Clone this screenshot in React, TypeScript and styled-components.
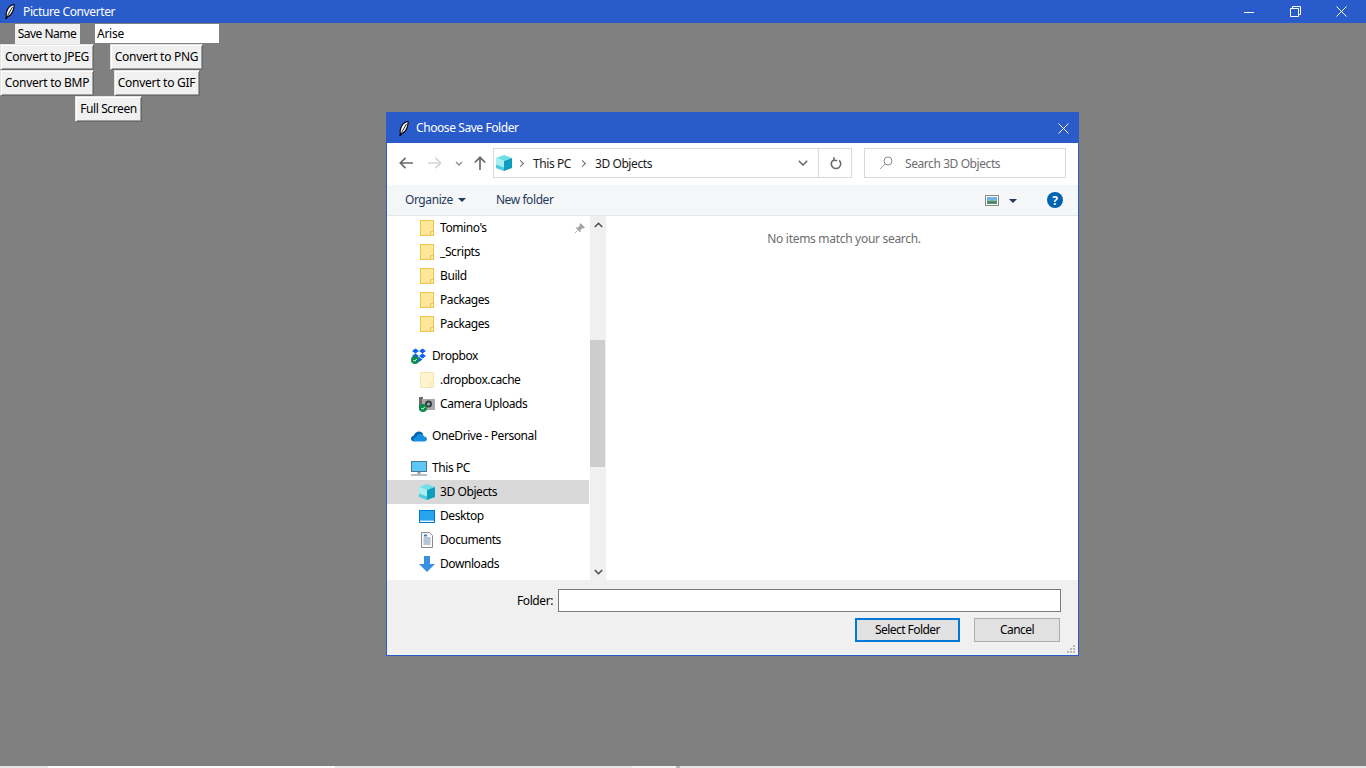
import React from 'react';
import styled, { createGlobalStyle } from 'styled-components';

const BLUE = '#295bcb';
const FONT = `'Noto Sans', 'Open Sans', sans-serif`;

const GlobalStyle = createGlobalStyle`
  html, body {
    margin: 0;
    height: 100%;
    background: #808080;
    overflow: hidden;
  }
  * { box-sizing: border-box; }
`;

const Feather = () => (
  <svg width="10" height="15" viewBox="0 0 10 15">
    <path d="M9 .5C6 1 3 3.500 1.700 7.500 1 9.700 1 11.500 1.500 12.500L.8 14.600 1.500 14.800 2.300 12.700C5 12 7.300 9 8.400 5.500 8.900 3.700 9.300 2 9 .5Z" fill="#fff" stroke="#000" strokeWidth="1.100" />
    <path d="M7.500 3 2.500 11.500" stroke="#000" strokeWidth=".9" fill="none" />
  </svg>
);

const CloseGlyph = () => (
  <svg width="11" height="11" viewBox="0 0 11 11">
    <path d="M.5 .5l10 10M10.500 .5l-10 10" stroke="#fff" strokeWidth="1" fill="none" />
  </svg>
);

const Cube = () => (
  <svg width="16" height="16" viewBox="0 0 16 16">
    <path d="M8 0 16 3 8 6 0 3Z" fill="#6fe0ea" />
    <path d="M0 3 8 6v10L0 13Z" fill="#a8eef2" />
    <path d="M16 3 8 6v10l8-3Z" fill="#0e9dbf" />
    <path d="M0 9.500 8 12.500v3.500L0 13Z" fill="#4fcbdc" />
  </svg>
);

const FolderIcon = ({ faded }: { faded?: boolean }) => (
  <svg width="14" height="16" viewBox="0 0 14 16" opacity={faded ? 0.45 : 1}>
    <rect x=".5" y=".5" width="13" height="15" fill="#ffe797" stroke="#eec64f" />
    <path d="M10.500 15.500v-4h3" fill="none" stroke="#eec64f" />
  </svg>
);

const SyncBadge = () => (
  <>
    <circle cx="4" cy="12" r="4" fill="#0c8a4d" />
    <path d="M2.300 12l1.300 1.300 2.200-2.400" stroke="#fff" strokeWidth="1" fill="none" />
  </>
);

const Dropbox = () => (
  <svg width="16" height="16" viewBox="0 0 16 16">
    <path d="M4.500 .5 8 3 4.500 5.500 1 3ZM11.500 .5 15 3l-3.500 2.500L8 3ZM4.500 5.500 8 8 4.500 10.500 1 8ZM11.500 5.500 15 8l-3.500 2.500L8 8ZM8 9l3.500 2.500L8 14l-3.500-2.500Z" fill="#0a62f2" />
    <SyncBadge />
  </svg>
);

const Camera = () => (
  <svg width="16" height="16" viewBox="0 0 16 16">
    <rect x="0" y="1" width="4" height="13" fill="#6a6a6a" />
    <rect x="3" y="3" width="13" height="11" fill="#a9a9a9" />
    <circle cx="9.500" cy="8" r="3.500" fill="#3b3b3b" />
    <circle cx="9.500" cy="8" r="1.500" fill="#8fb7c9" />
    <SyncBadge />
  </svg>
);

const OneDrive = () => (
  <svg width="16" height="11" viewBox="0 0 16 11">
    <path d="M3.500 10.500C1.500 10.500 0 9.300 0 7.700 0 6.200 1.200 5 2.800 4.800 3.500 2.300 5.500 .5 8 .5c1.900 0 3.400 1 4.200 2.700" fill="#0364b8" />
    <path d="M3.500 10.500h9.700c1.600 0 2.800-1.100 2.800-2.500S14.800 5.500 13.300 5.500C12.500 4 11 3 9.300 3 7.300 3 5.800 4.200 5 6 3.800 6 2.500 7 2.500 8.200c0 1 .3 1.700 1 2.300Z" fill="#1490df" />
  </svg>
);

const Monitor = () => (
  <svg width="16" height="15" viewBox="0 0 16 15">
    <rect x=".5" y=".5" width="15" height="10" fill="#5cc8f5" stroke="#4f7590" />
    <rect x="6.500" y="11" width="3" height="2" fill="#9a9a9a" />
    <rect x="0" y="13" width="16" height="2" fill="#b7bfc6" />
  </svg>
);

const Desktop = () => (
  <svg width="16" height="13" viewBox="0 0 16 13">
    <rect x="0" y="0" width="16" height="13" fill="#0078d7" />
    <rect x="1" y="1" width="14" height="9.500" fill="#26a4ee" />
    <rect x="1" y="10.500" width="14" height="1.500" fill="#eaf6ff" />
  </svg>
);

const Documents = () => (
  <svg width="12" height="16" viewBox="0 0 12 16">
    <path d="M.5 .5h8l3 3v12H.5Z" fill="#fbfbfb" stroke="#8a8a8a" />
    <path d="M2.500 6h7M2.500 8h7M2.500 10h7M2.500 12h7" stroke="#6f8fa8" strokeWidth="1" />
    <path d="M3 2.500h3v2H3Z" fill="#2f7fd0" />
  </svg>
);

const Downloads = () => (
  <svg width="16" height="16" viewBox="0 0 16 16">
    <path d="M5 0h6v8h5l-8 8-8-8h5Z" fill="#3a8fe0" />
  </svg>
);

const NavIcons = {
  folder: <FolderIcon />,
  faded: <FolderIcon faded />,
  dropbox: <Dropbox />,
  camera: <Camera />,
  onedrive: <OneDrive />,
  pc: <Monitor />,
  cube: <Cube />,
  desktop: <Desktop />,
  documents: <Documents />,
  downloads: <Downloads />,
};

type NavItem = { label: string; icon: keyof typeof NavIcons; child?: boolean; first?: boolean; selected?: boolean; pinned?: boolean };

const navItems: NavItem[] = [
  { label: "Tomino's", icon: 'folder', child: true, pinned: true },
  { label: '_Scripts', icon: 'folder', child: true },
  { label: 'Build', icon: 'folder', child: true },
  { label: 'Packages', icon: 'folder', child: true },
  { label: 'Packages', icon: 'folder', child: true },
  { label: 'Dropbox', icon: 'dropbox', first: true },
  { label: '.dropbox.cache', icon: 'faded', child: true },
  { label: 'Camera Uploads', icon: 'camera', child: true },
  { label: 'OneDrive - Personal', icon: 'onedrive', first: true },
  { label: 'This PC', icon: 'pc', first: true },
  { label: '3D Objects', icon: 'cube', child: true, selected: true },
  { label: 'Desktop', icon: 'desktop', child: true },
  { label: 'Documents', icon: 'documents', child: true },
  { label: 'Downloads', icon: 'downloads', child: true },
];

// the other windows peeking out under the app, as [width, colour]
const stripSegments: [number, string][] = [
  [48, '#e6e6e6'],
  [287, '#fbfbfb'],
  [297, '#e6e6e6'],
  [44, '#f4f4f4'],
  [4, '#b5b5b5'],
  [686, '#e6e6e6'],
];

export default function App() {
  return (
    <Screen>
      <GlobalStyle />
      <MainTitle>
        <TitleIcon><Feather /></TitleIcon>
        <MainTitleText>Picture Converter</MainTitleText>
        <WindowControls>
          <ControlButton>
            <svg width="10" height="10" viewBox="0 0 10 10"><path d="M0 5.500h10" stroke="#fff" fill="none" /></svg>
          </ControlButton>
          <ControlButton>
            <svg width="11" height="11" viewBox="0 0 11 11"><path d="M.5 2.500h8v8h-8ZM2.500 2.500v-2h8v8h-2" stroke="#fff" fill="none" /></svg>
          </ControlButton>
          <ControlButton><CloseGlyph /></ControlButton>
        </WindowControls>
      </MainTitle>

      <Workspace>
        <ConverterForm>
          <NameLabel>Save Name</NameLabel>
          <NameEntry readOnly value="Arise" />
          <TkButton $width={94}>Convert to JPEG</TkButton>
          <TkButton $width={93}>Convert to PNG</TkButton>
          <TkButton $width={94}>Convert to BMP</TkButton>
          <TkButton $width={86}>Convert to GIF</TkButton>
          <FullScreenButton $width={67}>Full Screen</FullScreenButton>
        </ConverterForm>

        <Dialog>
          <DialogTitle>
            <DialogFeather><Feather /></DialogFeather>
            <DialogTitleText>Choose Save Folder</DialogTitleText>
            <DialogClose><CloseGlyph /></DialogClose>
          </DialogTitle>

          <NavBar>
            <NavButtons>
              <BackArrow>
                <svg width="14" height="12" viewBox="0 0 14 12"><path d="M6.500 .8 1.300 6l5.200 5.200M1.500 6H14" stroke="#6b6b6b" strokeWidth="1.700" fill="none" /></svg>
              </BackArrow>
              <ForwardArrow>
                <svg width="14" height="12" viewBox="0 0 14 12"><path d="M7.500 .8 12.700 6l-5.200 5.200M12.500 6H0" stroke="#d6d6d6" strokeWidth="1.700" fill="none" /></svg>
              </ForwardArrow>
              <RecentArrow>
                <svg width="8" height="5" viewBox="0 0 8 5"><path d="M1 1l3 3 3-3" stroke="#8a8a8a" strokeWidth="1.300" fill="none" /></svg>
              </RecentArrow>
              <UpArrow>
                <svg width="12" height="14" viewBox="0 0 12 14"><path d="M.8 6.500 6 1.300l5.200 5.200M6 1.500V14" stroke="#6b6b6b" strokeWidth="1.700" fill="none" /></svg>
              </UpArrow>
            </NavButtons>
            <AddressBar>
              <AddressCube><Cube /></AddressCube>
              <Crumb>This PC</Crumb>
              <Crumb>3D Objects</Crumb>
              <AddressDrop>
                <svg width="10" height="6" viewBox="0 0 10 6"><path d="M.8 .8 5 5l4.200-4.200" stroke="#6b6b6b" strokeWidth="1.600" fill="none" /></svg>
              </AddressDrop>
              <RefreshBox>
                <svg width="12" height="13" viewBox="0 0 12 13"><path d="M4.500 2.400A4.700 4.700 0 1 0 9.200 3.400M4 .3v3.200h3.200" stroke="#6b6b6b" strokeWidth="1.600" fill="none" /></svg>
              </RefreshBox>
            </AddressBar>
            <SearchBox>
              <svg width="14" height="14" viewBox="0 0 14 14"><circle cx="9" cy="5" r="4" stroke="#8c8c8c" fill="none" /><path d="M6 8 1 13" stroke="#b39a8a" fill="none" /></svg>
              <SearchText>Search 3D Objects</SearchText>
            </SearchBox>
          </NavBar>

          <CommandBar>
            <CommandItem>Organize<Caret /></CommandItem>
            <NewFolder>New folder</NewFolder>
            <ViewGroup>
              <svg width="14" height="11" viewBox="0 0 14 11">
                <rect x=".5" y=".5" width="13" height="10" fill="#fff" stroke="#8a8a8a" />
                <rect x="2" y="2" width="10" height="3.500" fill="#6fb6e6" />
                <rect x="2" y="5.500" width="10" height="3.500" fill="#4f8f6c" />
              </svg>
              <Caret />
            </ViewGroup>
            <HelpBadge>?</HelpBadge>
          </CommandBar>

          <Browser>
            <NavPane>
              {navItems.map((item, i) => (
                <NavRow key={i} $child={item.child} $first={item.first} $selected={item.selected}>
                  <NavIcon>{NavIcons[item.icon]}</NavIcon>
                  <NavLabel>{item.label}</NavLabel>
                  {item.pinned && (
                    <PinMark>
                      <svg width="11" height="11" viewBox="0 0 11 11"><path d="M6.500 .5 10.500 4.500 9.500 5 7.800 5 6 7.500 6.300 9 2 4.700 3.500 5 6 3.200 6 1.500ZM3.800 7.200.8 10.200" fill="#a3a3a3" stroke="#a3a3a3" strokeWidth=".8" /></svg>
                    </PinMark>
                  )}
                </NavRow>
              ))}
            </NavPane>
            <ScrollBar>
              <ScrollArrow>
                <svg width="9" height="6" viewBox="0 0 9 6"><path d="M.8 5 4.500 1.300 8.200 5" stroke="#505050" strokeWidth="1.600" fill="none" /></svg>
              </ScrollArrow>
              <ScrollThumb />
              <ScrollArrow>
                <svg width="9" height="6" viewBox="0 0 9 6"><path d="M.8 1 4.500 4.700 8.200 1" stroke="#505050" strokeWidth="1.600" fill="none" /></svg>
              </ScrollArrow>
            </ScrollBar>
            <Results>No items match your search.</Results>
          </Browser>

          <DialogFooter>
            <FolderRow>
              <FolderLabel>Folder:</FolderLabel>
              <FolderInput readOnly />
            </FolderRow>
            <ButtonRow>
              <WinButton $primary>Select Folder</WinButton>
              <WinButton>Cancel</WinButton>
            </ButtonRow>
            <Grip>
              <svg width="10" height="10" viewBox="0 0 10 10">
                <path d="M7 1h2v2H7ZM4 4h2v2H4ZM7 4h2v2H7ZM1 7h2v2H1ZM4 7h2v2H4ZM7 7h2v2H7Z" fill="#b8b8b8" />
              </svg>
            </Grip>
          </DialogFooter>
        </Dialog>
      </Workspace>

      <BottomStrip>
        {stripSegments.map(([width, color], i) => (
          <StripSegment key={i} style={{ width, background: color }} />
        ))}
      </BottomStrip>
    </Screen>
  );
}

const Screen = styled.div`
  height: 768px;
  display: flex;
  flex-direction: column;
  font-family: ${FONT};
  font-size: 12px;
  color: #000;
`;

const MainTitle = styled.header`
  height: 23px;
  flex: none;
  display: flex;
  align-items: center;
  background: ${BLUE};
  color: #fff;
`;

const TitleIcon = styled.span`
  display: flex;
  margin-left: 5px;
`;

const MainTitleText = styled.span`
  margin-left: 8px;
  letter-spacing: -0.38px;
  padding-bottom: 1px;
`;

const WindowControls = styled.div`
  margin-left: auto;
  margin-right: 2px;
  display: flex;
`;

const ControlButton = styled.span`
  width: 46px;
  height: 23px;
  display: flex;
  align-items: center;
  justify-content: center;
`;

const Workspace = styled.main`
  position: relative;
  flex: 1;
`;

const ConverterForm = styled.div`
  width: 219px;
  padding-top: 1px;
  display: grid;
  grid-template-columns: 94px 125px;
  grid-template-rows: 20px 26px 26px 26px;
  justify-items: center;
  align-items: stretch;
`;

const NameLabel = styled.div`
  width: 65px;
  background: #f0f0f0;
  display: flex;
  align-items: center;
  justify-content: center;
  padding-bottom: 2px;
  letter-spacing: -0.5px;
`;

const NameEntry = styled.input`
  width: 124px;
  height: 19px;
  justify-self: end;
  border: 0;
  outline: 0;
  padding: 0 2px 1px;
  background: #fff;
  font: inherit;
  letter-spacing: -0.27px;
`;

const TkButton = styled.button<{ $width: number }>`
  width: ${p => p.$width}px;
  background: #f0f0f0;
  border: 1px solid;
  border-color: #e3e3e3 #696969 #696969 #e3e3e3;
  box-shadow: inset 1px 1px #fff, inset -1px -1px #a0a0a0;
  padding: 0 0 2px;
  font: inherit;
  letter-spacing: -0.27px;
  white-space: nowrap;
  color: #000;
`;

const FullScreenButton = styled(TkButton)`
  grid-column: 1 / span 2;
  justify-self: start;
  margin-left: 75px;
  letter-spacing: -0.4px;
`;

const Dialog = styled.section`
  position: absolute;
  left: 386px;
  top: 89px;
  width: 693px;
  height: 544px;
  border: 1px solid ${BLUE};
  background: #fff;
  display: flex;
  flex-direction: column;
  letter-spacing: -0.42px;
`;

const DialogTitle = styled.div`
  height: 30px;
  flex: none;
  display: flex;
  align-items: center;
  background: ${BLUE};
  color: #fff;
`;

const DialogFeather = styled.span`
  display: flex;
  margin-left: 12px;
`;

const DialogTitleText = styled.span`
  margin-left: 7px;
  padding-bottom: 2px;
`;

const DialogClose = styled.span`
  margin-left: auto;
  margin-right: 9px;
  display: flex;
`;

const NavBar = styled.div`
  height: 42px;
  flex: none;
  display: flex;
  align-items: center;
  padding: 0 12px 2px 0;
`;

const NavButtons = styled.div`
  width: 106px;
  flex: none;
  display: flex;
  align-items: center;
`;

const BackArrow = styled.span`
  display: flex;
  margin-left: 12px;
`;

const ForwardArrow = styled.span`
  display: flex;
  margin-left: 15px;
`;

const RecentArrow = styled.span`
  display: flex;
  margin-left: 13px;
`;

const UpArrow = styled.span`
  display: flex;
  margin-left: 11px;
`;

const AddressBar = styled.div`
  width: 359px;
  height: 30px;
  flex: none;
  border: 1px solid #d9d9d9;
  display: flex;
  align-items: center;
`;

const AddressCube = styled.span`
  display: flex;
  margin-left: 2px;
  margin-right: 5px;
`;

const Crumb = styled.span`
  display: flex;
  align-items: center;
  color: #1a1a1a;
  & + & { margin-left: 8px; }
  &::before {
    content: '';
    width: 4px;
    height: 4px;
    margin: 1px 10px 0 1px;
    border-top: 1px solid #6b6b6b;
    border-right: 1px solid #6b6b6b;
    transform: rotate(45deg);
  }
`;

const AddressDrop = styled.span`
  margin-left: auto;
  display: flex;
  margin-right: 10px;
`;

const RefreshBox = styled.span`
  width: 33px;
  height: 100%;
  border-left: 1px solid #d9d9d9;
  display: flex;
  align-items: center;
  justify-content: center;
  padding-left: 2px;
`;

const SearchBox = styled.div`
  margin-left: 12px;
  width: 202px;
  height: 30px;
  border: 1px solid #d9d9d9;
  display: flex;
  align-items: center;
  padding-left: 14px;
`;

const SearchText = styled.span`
  margin-left: 12px;
  color: #6d6d6d;
`;

const CommandBar = styled.div`
  height: 31px;
  flex: none;
  background: #f5f6f7;
  border-bottom: 1px solid #e6e6e6;
  display: flex;
  align-items: center;
  padding: 0 15px 0 18px;
  color: #1e395b;
`;

const CommandItem = styled.span`
  display: flex;
  align-items: center;
  padding-bottom: 2px;
`;

const Caret = styled.span`
  width: 0;
  height: 0;
  margin: 2px 0 0 5px;
  border-left: 4px solid transparent;
  border-right: 4px solid transparent;
  border-top: 4px solid #1e395b;
`;

const NewFolder = styled.span`
  margin-left: 30px;
  padding-bottom: 2px;
`;

const ViewGroup = styled.span`
  margin-left: auto;
  display: flex;
  align-items: center;
  gap: 5px;
  margin-right: 30px;
`;

const HelpBadge = styled.span`
  width: 16px;
  height: 16px;
  border-radius: 50%;
  background: #0063b1;
  color: #fff;
  font-size: 12px;
  font-weight: 700;
  display: flex;
  align-items: center;
  justify-content: center;
`;

const Browser = styled.div`
  flex: 1;
  min-height: 0;
  display: flex;
`;

const NavPane = styled.div`
  width: 202px;
  margin-right: 1px;
  flex: none;
  overflow: hidden;
`;

const NavRow = styled.div<{ $child?: boolean; $first?: boolean; $selected?: boolean }>`
  height: 24px;
  display: flex;
  align-items: center;
  margin-top: ${p => (p.$first ? '8px' : '0')};
  padding-left: ${p => (p.$child ? '32px' : '24px')};
  background: ${p => (p.$selected ? '#d9d9d9' : 'transparent')};
  color: #000;
`;

const NavIcon = styled.span`
  width: 16px;
  height: 16px;
  flex: none;
  display: flex;
  align-items: center;
  justify-content: center;
`;

const NavLabel = styled.span`
  margin-left: 5px;
  padding-bottom: 2px;
  white-space: nowrap;
`;

const PinMark = styled.span`
  margin-left: auto;
  margin-right: 4px;
  display: flex;
`;

const ScrollBar = styled.div`
  width: 16px;
  flex: none;
  background: #f0f0f0;
  display: flex;
  flex-direction: column;
  padding-top: 124px;
  position: relative;
`;

const ScrollArrow = styled.span`
  position: absolute;
  left: 0;
  width: 16px;
  height: 17px;
  display: flex;
  align-items: center;
  justify-content: center;
  &:first-child { top: 0; }
  &:last-child { bottom: 0; }
`;

const ScrollThumb = styled.div`
  width: 15px;
  height: 127px;
  background: #cdcdcd;
`;

const Results = styled.div`
  flex: 1;
  margin-left: 1px;
  padding: 14px 0 0 3px;
  text-align: center;
  color: #6d6d6d;
  letter-spacing: -0.3px;
`;

const DialogFooter = styled.div`
  height: 75px;
  flex: none;
  position: relative;
  background: #f0f0f0;
  padding: 9px 17px 0 0;
  display: flex;
  flex-direction: column;
`;

const FolderRow = styled.div`
  display: flex;
  align-items: center;
  justify-content: flex-end;
`;

const FolderLabel = styled.label`
  margin-right: 5px;
`;

const FolderInput = styled.input`
  width: 503px;
  height: 23px;
  border: 1px solid #7a7a7a;
  outline: 0;
  background: #fff;
`;

const ButtonRow = styled.div`
  margin-top: 6px;
  display: flex;
  justify-content: flex-end;
  gap: 14px;
  padding-right: 1px;
`;

const WinButton = styled.button<{ $primary?: boolean }>`
  height: 24px;
  width: ${p => (p.$primary ? '105px' : '86px')};
  padding: 0 0 2px;
  font: inherit;
  letter-spacing: -0.55px;
  color: #000;
  background: #e1e1e1;
  border: ${p => (p.$primary ? '2px solid #0078d7' : '1px solid #adadad')};
`;

const Grip = styled.span`
  position: absolute;
  right: 2px;
  bottom: 1px;
  display: flex;
`;

const BottomStrip = styled.footer`
  height: 2px;
  flex: none;
  display: flex;
`;

const StripSegment = styled.span`
  height: 100%;
  flex: none;
`;
